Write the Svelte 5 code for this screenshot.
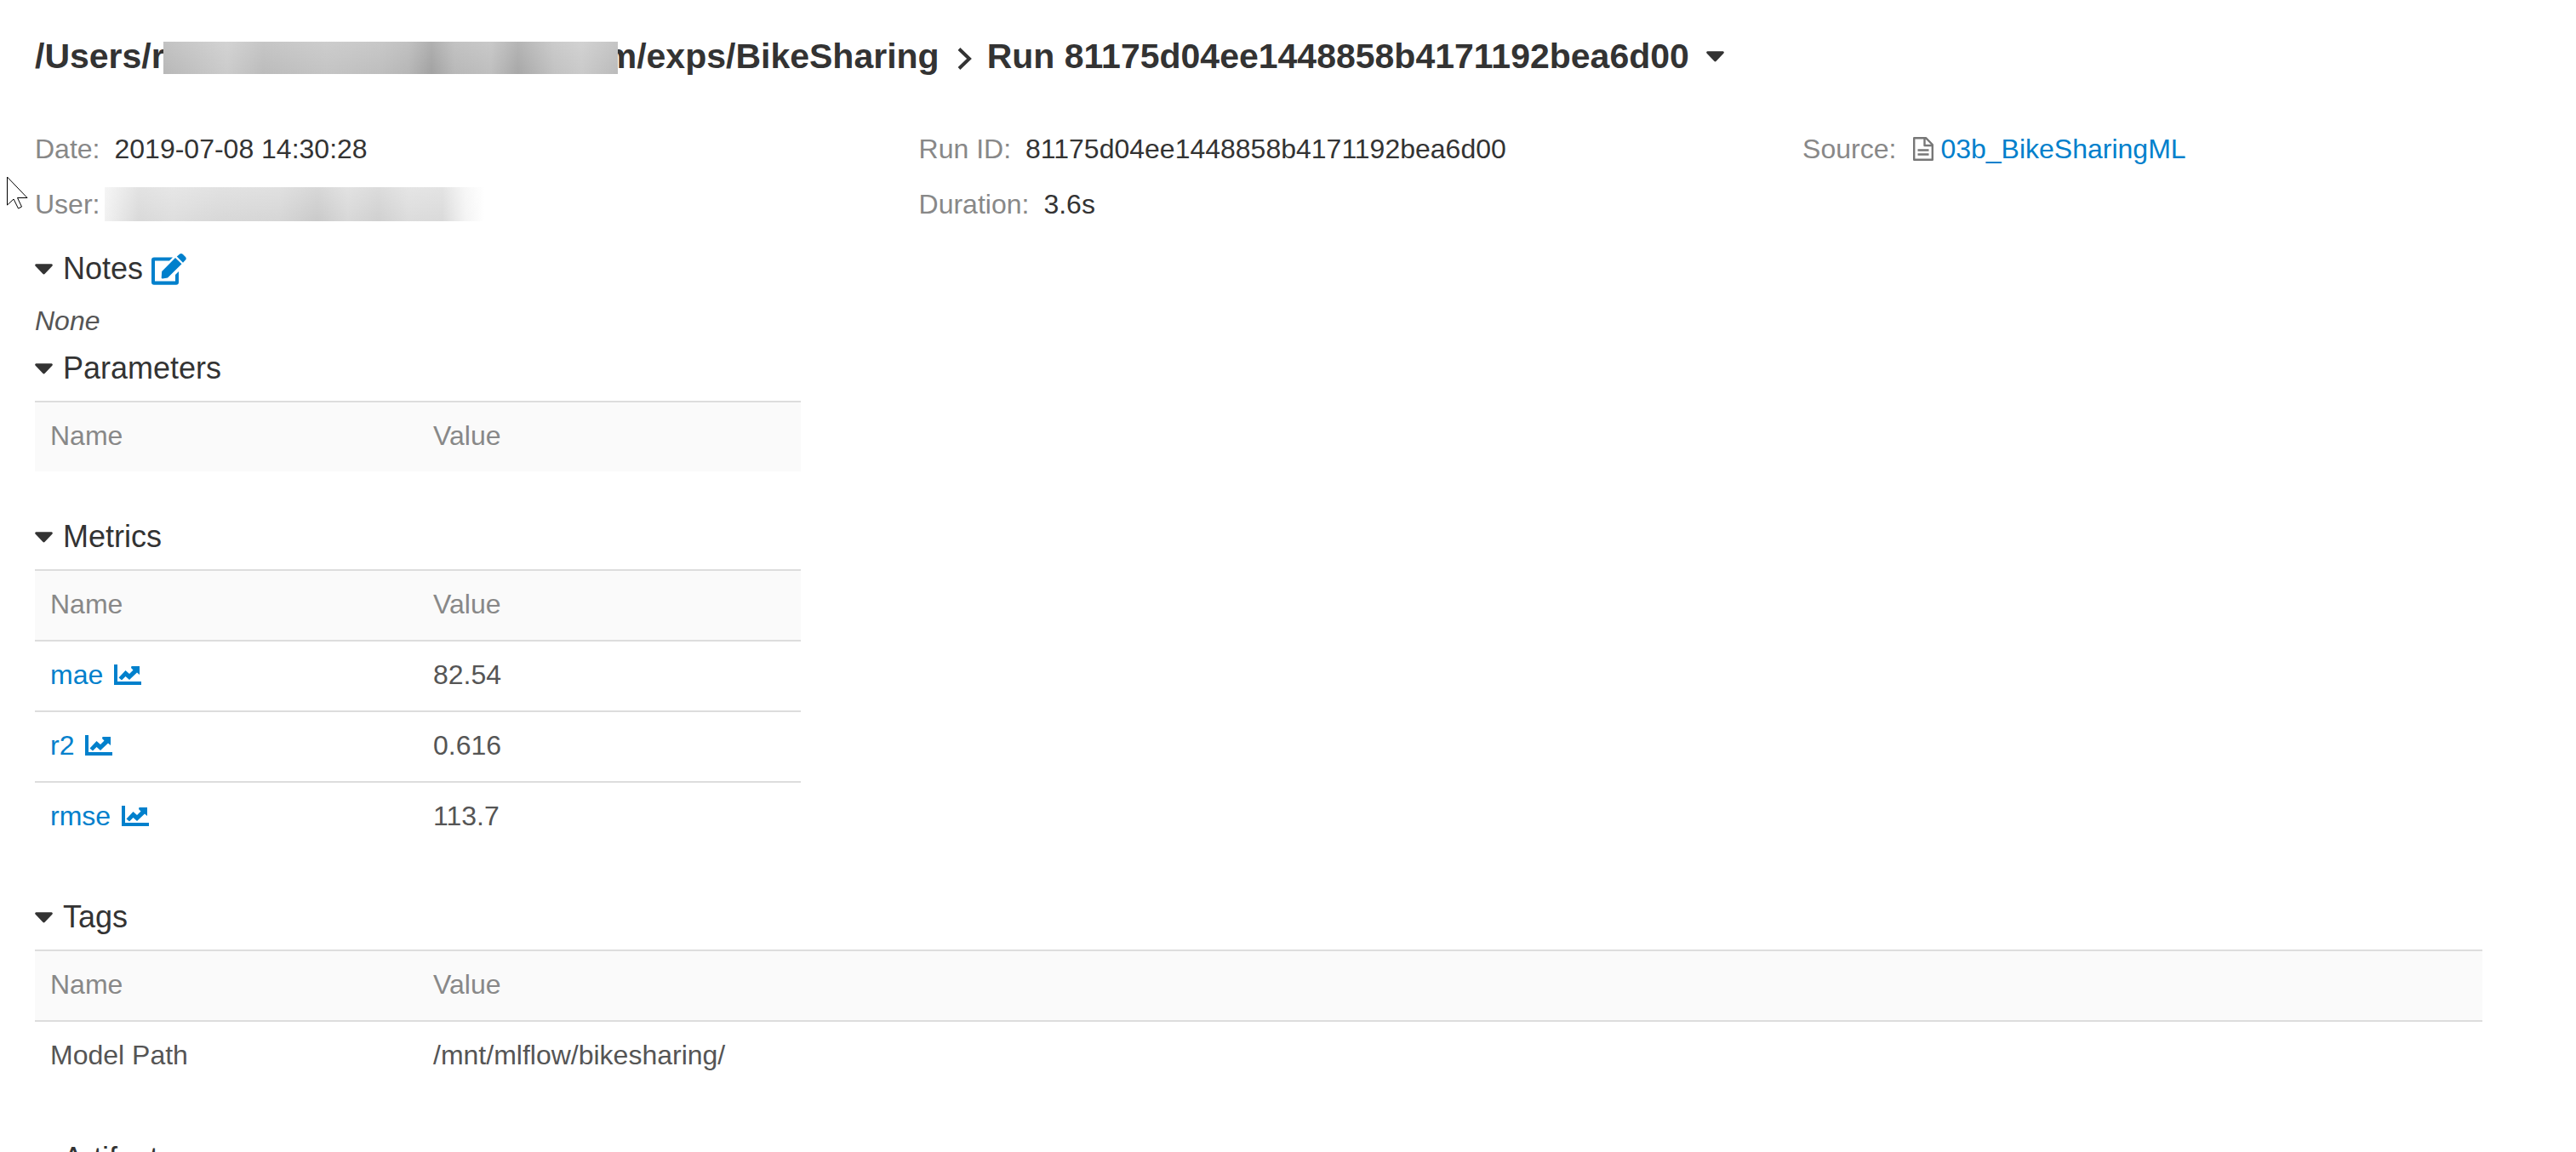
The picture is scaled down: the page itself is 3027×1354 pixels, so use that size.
<script>
  const params = [];
  const metrics = [
    { name: 'mae', value: '82.54' },
    { name: 'r2', value: '0.616' },
    { name: 'rmse', value: '113.7' }
  ];
  const tags = [{ name: 'Model Path', value: '/mnt/mlflow/bikesharing/' }];
  const runId = '81175d04ee1448858b4171192bea6d00';
</script>

{#snippet caret()}
  <svg class="caret" viewBox="0 0 22 13" aria-hidden="true"><path d="M1.500 0H20.500Q22.500 .6 21.500 2.400L12.300 12Q11 13.500 9.700 12L.5 2.400Q-.5 .6 1.500 0Z" /></svg>
{/snippet}

{#snippet heading(title)}
  <h2><button class="toggle" type="button" aria-expanded="true">{@render caret()}{title}</button></h2>
{/snippet}

{#snippet grid(rows, wide, linked)}
  <table class:wide>
    <thead><tr><th scope="col">Name</th><th scope="col">Value</th></tr></thead>
    <tbody>
      {#each rows as row}
        <tr>
          <td>
            {#if linked}
              <a class="metric" href="#{row.name}">{row.name}<svg class="chart" viewBox="0 0 32 24" aria-hidden="true"><path d="M0 0H4V20H32V24H0Z" /><path d="M20.500 2H30V12L27 9.500L18 18L13.500 14L9 18.500L5.500 15.500L13.500 7L18 11L22.500 6.500L20 4Z" /></svg></a>
            {:else}
              {row.name}
            {/if}
          </td>
          <td>{row.value}</td>
        </tr>
      {/each}
    </tbody>
  </table>
{/snippet}

<main>
  <h1>
    <a href="#experiment">/Users/r<span class="redacted name"></span>m/exps/BikeSharing</a>
    <svg class="chevron" viewBox="0 0 17 26" aria-hidden="true"><path d="M2 1.5L14 13L2 24.5" /></svg>
    <span>Run {runId}</span>
    <button class="menu" type="button" aria-label="Run actions">{@render caret()}</button>
  </h1>

  <dl class="info">
    <div><dt>Date:</dt><dd>2019-07-08 14:30:28</dd></div>
    <div><dt>Run ID:</dt><dd>{runId}</dd></div>
    <div class="source">
      <dt>Source:</dt>
      <dd>
        <svg class="doc" viewBox="0 0 24 28" aria-hidden="true"><path d="M1.200 1.200H15L22.800 9V26.800H1.200ZM13.500 1.200V10H22.800M5.500 15.500H18.500M5.500 20.500H18.500" /></svg>
        <a href="#source">03b_BikeSharingML</a>
      </dd>
    </div>
    <div class="user"><dt>User:</dt><dd><span class="redacted mail"></span></dd></div>
    <div><dt>Duration:</dt><dd>3.6s</dd></div>
  </dl>

  <section class="notes">
    <div class="notes-head">
      {@render heading('Notes')}
      <button class="edit" type="button" aria-label="Edit notes">
        <svg viewBox="0 0 41 37" aria-hidden="true"><path d="M25 4.500H3Q0 4.500 0 7.500V33.700Q0 36.700 3 36.700H29Q32 36.700 32 33.700V21L28 25V32.500H4V8.500H21Z" /><path d="M11.700 28.300L12.200 21L28 5L35.500 12.300L19 28.500L13 29.500Q11.500 29.500 11.700 28.300ZM29.800 3.500L33 .8Q35 -.8 37 1L40 4Q41.500 6 40 7.500L37 10.700Z" /></svg>
      </button>
    </div>
    <p>None</p>
  </section>

  <section>{@render heading('Parameters')}{@render grid(params, false, false)}</section>
  <section>{@render heading('Metrics')}{@render grid(metrics, false, true)}</section>
  <section>{@render heading('Tags')}{@render grid(tags, true, false)}</section>
  <section>{@render heading('Artifacts')}</section>

  <svg class="pointer" viewBox="0 0 26 40" aria-hidden="true"><path d="M.5 1V34L8 27L13.500 38L17.500 36L12.500 25.500H24Z" /></svg>
</main>

<style>
  :global(html) { overflow: hidden; }
  :global(body) { background: #fff; }
  main {
    position: relative;
    padding: 42px 110px 0 41px;
    font: 32px/48px "Liberation Sans", Arial, sans-serif;
    color: #333;
  }
  a { color: #0080cc; text-decoration: none; }
  button { padding: 0; border: 0; background: none; color: inherit; font: inherit; cursor: pointer; }
  svg { display: block; flex: none; fill: currentColor; }
  .caret { width: 21px; height: 13px; }

  h1 { display: flex; align-items: center; margin: 0 0 61px; font-size: 41px; line-height: 48px; white-space: nowrap; }
  h1 a { display: flex; align-items: center; color: inherit; }
  .redacted { display: block; }
  .name {
    z-index: 1;
    width: 534px;
    height: 38px;
    margin: 4px -14px 0 -2px;
    background:
      linear-gradient(0deg, #0000, #ffffff26),
      linear-gradient(90deg, #b8b8b8, #cbcbcb 14%, #bcbcbc 22%, #c4c4c4 36%, #bebebe 48%, #b6b6b6 54%, #a2a2a2 59%, #b8b8b8 64%, #bfbfbf 72%, #a8a8a8 78%, #c2c2c2 86%, #cacaca 92%, #bbb);
  }
  .chevron { width: 17px; height: 26px; margin: 6px 18px 0 21px; fill: none; stroke: currentColor; stroke-width: 4; }
  .menu { margin-left: 20px; }

  .info { display: grid; grid-template-columns: 13fr 13fr 10fr; row-gap: 17px; margin: 0 0 28px; }
  .info > div { display: flex; align-items: center; gap: 17px; }
  .info .user { gap: 6px; }
  .info .source { gap: 20px; }
  dt { color: #888; }
  dd { margin: 0; }
  .source dd { display: flex; align-items: center; gap: 8px; }
  .doc { width: 24px; height: 28px; fill: none; stroke: #777; stroke-width: 2.4; stroke-linejoin: round; }
  .mail {
    width: 446px;
    height: 40px;
    background:
      linear-gradient(0deg, #0000, #ffffff40),
      linear-gradient(90deg, #f2f2f2, #d9d9d9 9%, #dedede 18%, #d8d8d8 30%, #d6d6d6 46%, #cacaca 56%, #d8d8d8 64%, #d0d0d0 72%, #dcdcdc 80%, #dadada 89%, #f4f4f4 95%, #fff);
  }

  h2 { margin: 0; font-size: 36px; font-weight: 400; line-height: 48px; }
  .toggle { display: flex; align-items: center; gap: 12px; }
  .notes-head { display: flex; align-items: center; gap: 10px; }
  .edit { color: #0080cc; }
  .edit svg { width: 41px; height: 37px; }
  p { margin: 13px 0 8px; color: #555; font-style: italic; }

  table { width: 100%; max-width: 900px; margin: 14px 0 53px; border-spacing: 0; table-layout: fixed; text-align: left; }
  .wide { max-width: none; margin-bottom: 56px; }
  th, td { height: 78px; padding: 0 18px 3px; border-top: 2px solid #ddd; font-weight: 400; }
  th { background: #fafafa; color: #888; }
  th:first-child { width: 414px; }
  td { color: #555; }
  .metric { display: flex; align-items: center; gap: 13px; }
  .chart { width: 32px; height: 24px; }

  .pointer { position: absolute; left: 8px; top: 207px; width: 26px; height: 40px; fill: #fff; stroke: #000; stroke-width: 1; }
</style>
